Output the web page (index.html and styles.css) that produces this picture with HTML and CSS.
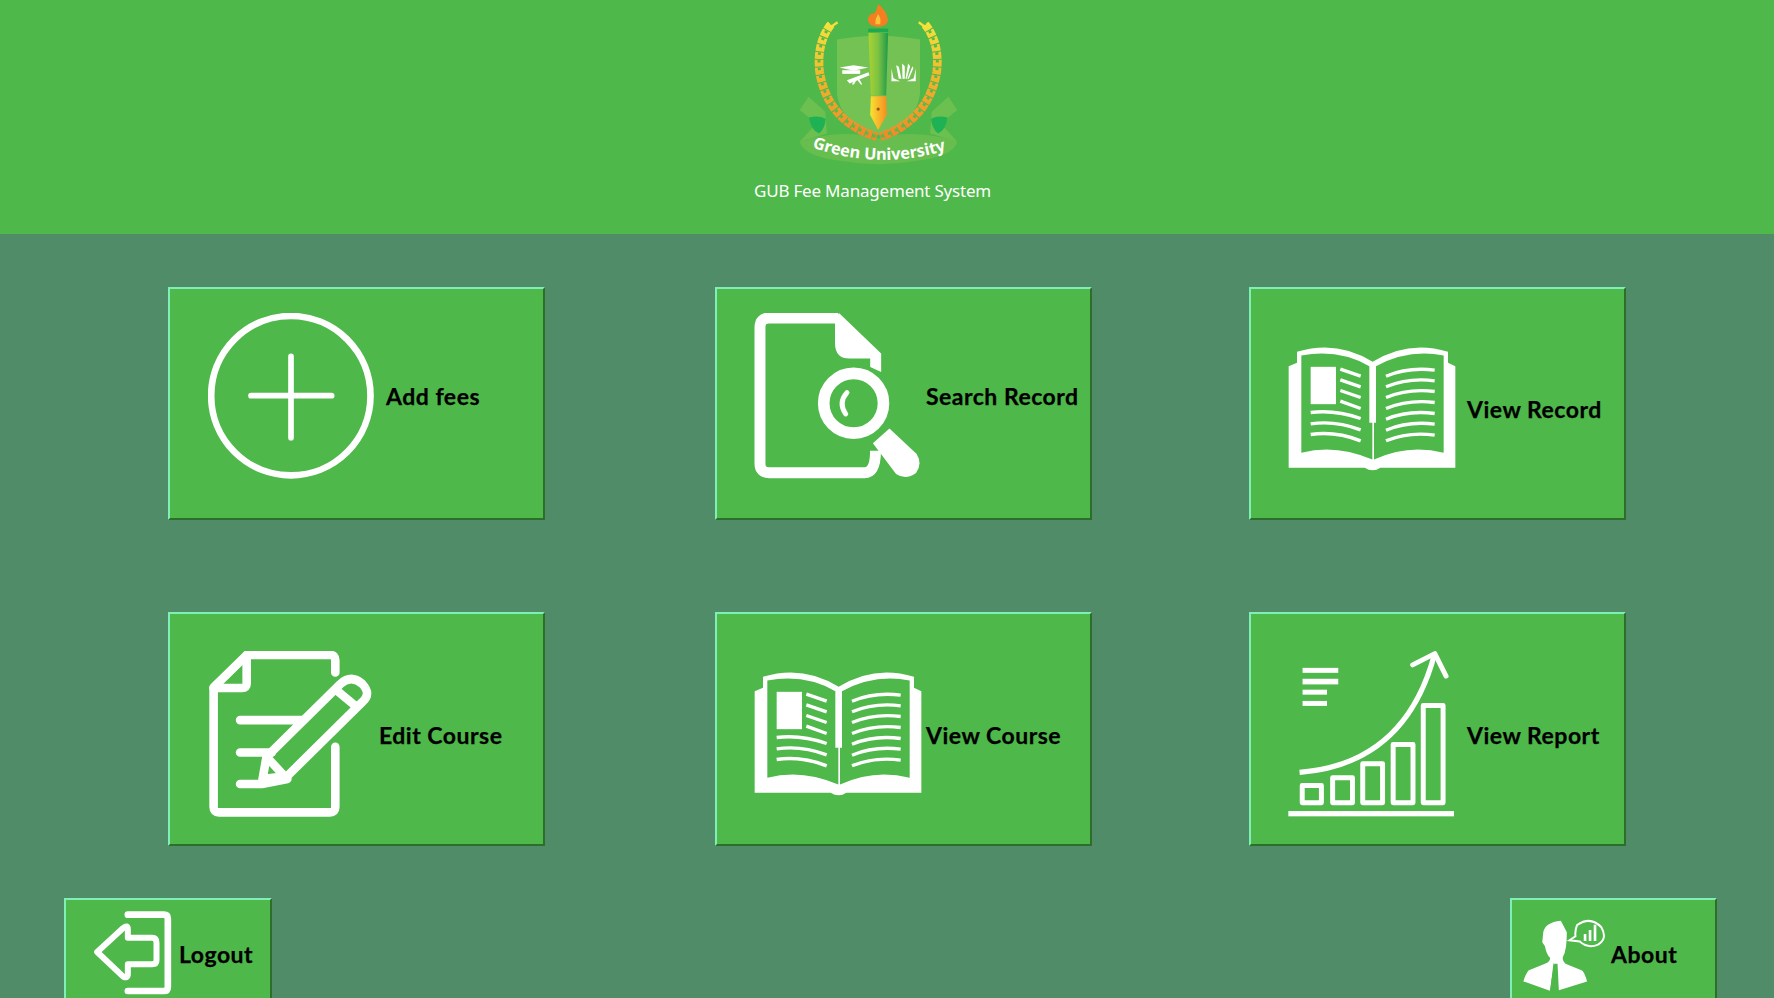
FILE: index.html
```html
<!DOCTYPE html>
<html lang="en">
<head>
<meta charset="utf-8">
<title>GUB Fee Management System</title>
<link rel="stylesheet" href="styles.css">
</head>
<body>
<svg class="defs" width="0" height="0" aria-hidden="true">
  <defs>
    <linearGradient id="wreath" x1="0" y1="0" x2="0" y2="1">
      <stop offset="0" stop-color="#f4e23a"/><stop offset=".5" stop-color="#f2b32c"/><stop offset="1" stop-color="#f08a2a"/>
    </linearGradient>
    <linearGradient id="barrel" x1="0" y1="0" x2="1" y2="0">
      <stop offset="0" stop-color="#a9d330"/><stop offset=".5" stop-color="#7cc242"/><stop offset="1" stop-color="#1c9a4a"/>
    </linearGradient>
    <linearGradient id="nib" x1="0" y1="0" x2="1" y2="0">
      <stop offset="0" stop-color="#f9e231"/><stop offset="1" stop-color="#f58d22"/>
    </linearGradient>
    <symbol id="book" viewBox="128 198 504 380">
      <path fill="#fff" d="M130 258 L155 248 V215 Q275 178 382 245 Q490 178 608 215 V248 L630 258 V563 H405 Q382 578 358 563 H130 Z"/>
      <path fill="#4eb84a" d="M168 226 Q280 205 372 258 V428 H381 V538 Q270 490 168 518 Z"/>
      <path fill="#4eb84a" d="M392 258 Q490 205 595 226 V518 Q490 490 386 538 V428 H392 Z"/>
      <rect fill="#fff" x="196" y="260" width="76" height="112"/>
      <g fill="none" stroke="#fff" stroke-width="10">
        <path d="M285 267 L346 288 M285 299 L346 320 M285 331 L346 352 M285 363 L346 385"/>
        <path d="M196 397 Q270 388 346 415 M196 431 Q270 420 346 449 M196 463 Q270 452 346 482"/>
        <path d="M422 288 Q490 260 568 270 M422 320 Q490 292 568 302 M422 352 Q490 324 568 334 M422 385 Q490 357 568 367 M422 417 Q490 389 568 400 M422 450 Q490 422 568 432 M422 482 Q490 454 568 465"/>
      </g>
    </symbol>
  </defs>
</svg>

<header class="top">
  <svg class="logo" viewBox="170 0 490 500" role="img" aria-label="Green University crest">
    <path fill="#74c254" d="M290 118 Q415 95 540 118 V280 Q530 370 415 405 Q300 370 290 280 Z"/>
    <path fill="#6cc04f" d="M205 290 L255 335 L260 400 L178 425 L228 370 L178 330 Z"/>
    <path fill="#6cc04f" d="M625 290 L575 335 L570 400 L652 425 L602 370 L652 330 Z"/>
    <path fill="#67be4e" d="M178 425 Q300 385 415 415 Q530 385 652 425 Q640 470 520 484 Q415 502 310 484 Q190 470 178 425 Z"/>
    <path fill="#1fb254" d="M206 352 Q235 345 256 356 Q255 385 236 400 Q212 390 206 352 Z"/>
    <path fill="#1fb254" d="M622 352 Q595 345 573 356 Q575 385 594 400 Q618 390 622 352 Z"/>
    <g fill="none" stroke-linecap="butt">
      <path class="wr-base" d="M272 72 Q228 130 238 215 Q255 320 335 375 Q370 398 410 410"/>
      <path class="wr-base" d="M555 72 Q600 130 590 215 Q572 320 492 375 Q458 398 420 410"/>
      <path class="wr-hole" d="M272 72 Q228 130 238 215 Q255 320 335 375 Q370 398 410 410"/>
      <path class="wr-hole" d="M555 72 Q600 130 590 215 Q572 320 492 375 Q458 398 420 410"/>
    </g>
    <path d="M262 68 L272 80 L292 66 M536 66 L555 80 L566 68" fill="none" stroke="#f4e23a" stroke-width="7"/>
    <path fill="#f47f20" d="M414 12 Q440 30 444 60 Q440 78 414 80 Q386 78 383 60 Q385 38 402 40 Q410 30 414 12 Z"/>
    <path fill="#f9c13c" d="M414 42 Q424 55 420 72 H406 Q404 55 414 42 Z"/>
    <rect x="384" y="85" width="60" height="10" fill="#1fa84f"/>
    <path fill="url(#barrel)" d="M385 98 H444 L438 286 H392 Z"/>
    <path fill="url(#nib)" d="M392 288 H438 L440 345 L414 390 L390 345 Z"/>
    <circle cx="414" cy="327" r="5" fill="#9a5a12"/>
    <g fill="#fff">
      <path d="M298 202 L340 195 L384 202 L340 212 Z"/>
      <rect x="306" y="210" width="54" height="11"/>
      <path d="M320 240 L385 216 L388 225 L328 250 Z"/>
      <path d="M345 232 L335 253 H341 L350 238 L362 253 H366 L354 230 Z"/>
      <path d="M454 205 L460 234 L480 243 H454 Z M527 205 L521 234 L500 243 H527 Z"/>
      <path d="M468 195 L476 200 L484 236 H476 Z M486 190 L494 198 L494 236 H487 Z M504 190 L510 198 L500 236 H496 Z M517 198 L520 204 L506 236 H502 Z"/>
    </g>
    <path id="ribbonText" d="M215 442 Q415 512 614 452" fill="none"/>
    <text class="logo-text"><textPath href="#ribbonText">Green University</textPath></text>
  </svg>
  <p class="title">GUB Fee Management System</p>
</header>

<main class="grid">
  <a class="card card-a">
    <svg class="icon" viewBox="143 100 498 498" aria-hidden="true">
      <circle cx="391.500" cy="348" r="239" fill="none" stroke="#fff" stroke-width="20"/>
      <path d="M272 348 H514 M392 230 V474" fill="none" stroke="#fff" stroke-width="17" stroke-linecap="round"/>
    </svg>
    <span class="label label-add">Add fees</span>
  </a>

  <a class="card card-b">
    <svg class="icon" viewBox="132 100 500 500" aria-hidden="true">
      <path d="M385 115 H178 Q150 115 150 143 V553 Q150 581 178 581 H465 Q498 581 498 515" fill="none" stroke="#fff" stroke-width="33"/>
      <path fill="#fff" d="M388 100 L515 222 V278 L482 263 V237 H420 Q376 237 376 190 V120 Z"/>
      <circle cx="432" cy="372" r="90" fill="#4eb84a" stroke="#fff" stroke-width="35"/>
      <path d="M412 340 Q385 370 408 404" fill="none" stroke="#fff" stroke-width="15" stroke-linecap="round"/>
      <path fill="#fff" d="M490 492 L540 448 L622 525 Q640 555 620 582 Q590 605 560 585 Z"/>
    </svg>
    <span class="label label-search">Search Record</span>
  </a>

  <a class="card card-c">
    <svg class="book" aria-hidden="true"><use href="#book"/></svg>
    <span class="label label-record">View Record</span>
  </a>

  <a class="card card-d">
    <svg class="icon" viewBox="148 138 490 502" aria-hidden="true">
      <g fill="none" stroke="#fff" stroke-width="26" stroke-linecap="round" stroke-linejoin="round">
        <path d="M530 203 V166 Q530 150 514 150 H262 L162 248 V610 Q162 626 178 626 H514 Q530 626 530 610 V428"/>
        <path d="M262 150 V236 Q262 250 248 250 H162"/>
        <path d="M242 347 H432 M242 445 H338 M242 540 H308 L385 525"/>
        <path d="M310 525 L322 458 L545 238 Q578 208 612 238 Q640 268 612 292 L385 516 Z"/>
        <path d="M540 262 L592 305 M322 458 L372 512"/>
      </g>
    </svg>
    <span class="label label-edit">Edit Course</span>
  </a>

  <a class="card card-e">
    <svg class="book" aria-hidden="true"><use href="#book"/></svg>
    <span class="label label-course">View Course</span>
  </a>

  <a class="card card-f">
    <svg class="icon" viewBox="128 138 502 502" aria-hidden="true">
      <g fill="#fff">
        <rect x="172" y="189" width="108" height="15"/>
        <rect x="172" y="222" width="108" height="17"/>
        <rect x="172" y="255" width="74" height="15"/>
        <rect x="172" y="289" width="74" height="15"/>
        <rect x="129" y="622" width="501" height="16"/>
      </g>
      <g fill="none" stroke="#fff" stroke-width="15" stroke-linejoin="round">
        <rect x="171" y="545" width="58" height="52"/>
        <rect x="263" y="521" width="60" height="76"/>
        <rect x="354" y="479" width="60" height="118"/>
        <rect x="446" y="421" width="60" height="176"/>
        <rect x="537" y="303" width="60" height="294"/>
      </g>
      <path d="M163 505 Q480 480 570 152" fill="none" stroke="#fff" stroke-width="16"/>
      <path d="M505 180 L572 146 L606 214" fill="none" stroke="#fff" stroke-width="15" stroke-linecap="round" stroke-linejoin="round"/>
    </svg>
    <span class="label label-report">View Report</span>
  </a>
</main>

<footer class="bottom">
  <a class="card small small-logout">
    <svg class="small-icon logout-icon" viewBox="128 95 236 252" aria-hidden="true">
      <path d="M232 106 H340 Q352 106 352 118 V322 Q352 335 340 335 H232" fill="none" stroke="#fff" stroke-width="20" stroke-linecap="round"/>
      <path d="M218 146 L140 218 L218 292 Q232 298 232 285 V255 H305 Q318 255 318 243 V190 Q318 175 305 175 H232 V150 Q232 135 218 146 Z" fill="none" stroke="#fff" stroke-width="18" stroke-linejoin="round"/>
    </svg>
    <span class="label label-logout">Logout</span>
  </a>
  <a class="card small small-about">
    <svg class="small-icon about-icon" viewBox="84 110 250 220" aria-hidden="true">
      <path fill="#fff" d="M198 115 Q150 120 145 150 L142 180 L150 192 Q155 218 165 226 Q168 238 150 245 L100 265 Q90 280 85 298 L165 326 L172 280 L178 245 H188 L192 325 L277 298 Q270 272 262 265 L212 245 Q200 235 205 222 Q216 205 216 150 Z"/>
      <path d="M176 240 L166 326 L175 330 L182 262 L190 326" fill="#4eb84a"/>
      <path d="M247 128 Q288 100 320 135 Q340 170 310 187 Q280 200 255 178 L224 174 L242 162 Q240 145 247 128 Z" fill="none" stroke="#fff" stroke-width="6"/>
      <path d="M271 155 V176 M286 143 V176 M301 127 V176" stroke="#fff" stroke-width="8" fill="none"/>
    </svg>
    <span class="label label-about">About</span>
  </a>
</footer>
</body>
</html>
```
FILE: styles.css
```css
* { box-sizing: border-box; }
html, body { margin: 0; height: 100%; }
body {
  width: 1774px;
  height: 998px;
  overflow: hidden;
  background: #508c68;
  font-family: "Lato", "Liberation Sans", sans-serif;
}
.defs { display: block; height: 0; }

.top {
  height: 234px;
  background: #4eb84a;
  padding-left: 754px;
  display: flex;
  flex-direction: column;
  align-items: flex-start;
}
.logo { width: 163px; height: 167px; margin-left: 43px; display: block; }
.logo-text { font: 700 49px "Noto Sans", sans-serif; fill: #fff; }
.wr-base { stroke: url(#wreath); stroke-width: 26; stroke-dasharray: 20 3; }
.wr-hole { stroke: #57ba4a; stroke-width: 9; stroke-dasharray: 8 15; }
.title {
  margin: 12px 0 0;
  color: #fff;
  font: 400 17px/24px "Noto Sans", sans-serif;
  letter-spacing: -.2px;
}

.grid {
  display: grid;
  grid-template-columns: 547px 534px 377px;
  grid-template-rows: 233px 234px;
  row-gap: 92px;
  padding: 53px 0 0 168px;
}

.card {
  display: flex;
  align-items: flex-start;
  width: 377px;
  background: #4eb84a;
  border-style: solid;
  border-width: 2px;
  border-color: #7fefb8 #2c6e2a #2c6e2a #7fefb8;
  color: #000;
  padding-left: 37px;
}
.icon { width: 166px; height: 166px; display: block; flex: none; }
.book { width: 168px; height: 127px; display: block; flex: none; margin-top: 57px; }
.card-a .icon, .card-b .icon { margin-top: 24px; }
.card-d .icon, .card-f .icon { margin-top: 37px; }
.card-a .icon { margin-left: 1px; }

.label {
  font-weight: 700;
  font-size: 23px;
  line-height: 28px;
  letter-spacing: .5px;
  white-space: nowrap;
  -webkit-text-stroke: .25px #000;
}
.label-add { margin: 93px 0 0 12px; }
.label-search { margin: 93px 0 0 6px; }
.label-record { margin: 106px 0 0 11px; }
.label-edit { margin: 107px 0 0 6px; }
.label-course { margin: 107px 0 0 4px; }
.label-report { margin: 107px 0 0 13px; }

.bottom {
  display: flex;
  justify-content: space-between;
  padding: 52px 57px 0 64px;
}
.small { height: 140px; padding-left: 0; }
.small-logout { width: 208px; }
.small-about { width: 207px; }
.small-icon { display: block; flex: none; }
.logout-icon { width: 79px; height: 84px; margin: 11px 0 0 27px; }
.about-icon { width: 83px; height: 73px; margin: 19px 0 0 11px; }
.label-logout { margin: 40px 0 0 7px; }
.label-about { margin: 40px 0 0 5px; }
```
